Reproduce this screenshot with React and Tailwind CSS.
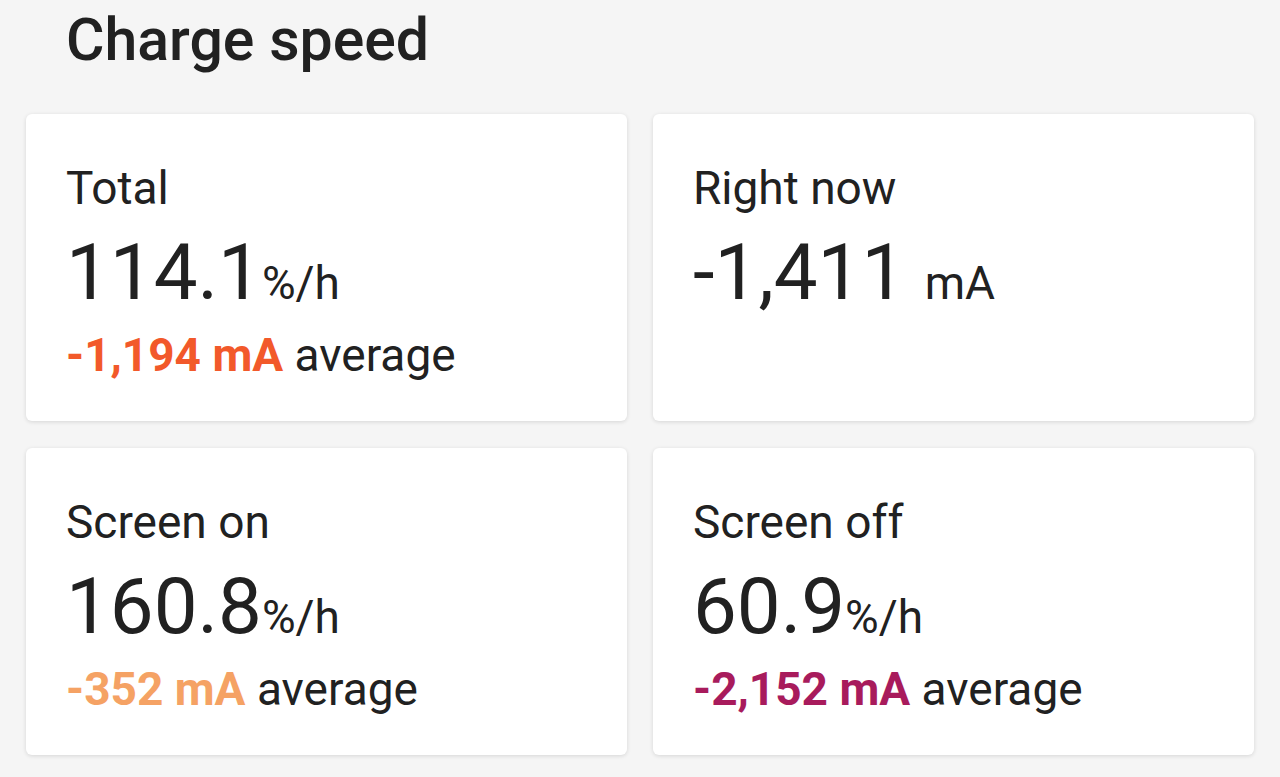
import React from 'react';

const stats = [
  { label: 'Total', value: '114.1', unit: '%/h', avg: '-1,194 mA', color: 'text-[#f2592a]' },
  { label: 'Right now', value: '-1,411', unit: 'mA', spaced: true },
  { label: 'Screen on', value: '160.8', unit: '%/h', avg: '-352 mA', color: 'text-[#f5a264]' },
  { label: 'Screen off', value: '60.9', unit: '%/h', avg: '-2,152 mA', color: 'text-[#a81b5c]' },
];

function StatCard({ stat }) {
  return (
    <div className="bg-white rounded-[6px] shadow-[0_1px_4px_rgba(0,0,0,0.13)] px-[40px] pt-[47px] pb-[39px]">
      <div className="text-[46px] leading-[54px]">{stat.label}</div>
      <div className="mt-[10px] text-[78px] leading-[96px] whitespace-pre">
        {stat.value}{stat.spaced ? ' ' : ''}
        <span className="text-[46px] leading-none">{stat.unit}</span>
      </div>
      {stat.avg && (
        <div className="mt-[7px] text-[46px] leading-[54px]">
          <span className={`font-bold ${stat.color}`}>{stat.avg}</span> average
        </div>
      )}
    </div>
  );
}

export default function App() {
  return (
    <div className="min-h-screen bg-[#f5f5f5] px-[26px] text-[#212121] font-['Roboto',sans-serif]">
      <h1 className="pl-[40px] pt-[5px] mb-[39px] text-[59px] leading-[70px] font-medium">Charge speed</h1>
      <div className="grid grid-cols-2 gap-x-[26px] gap-y-[27px]">
        {stats.map((s) => (
          <StatCard key={s.label} stat={s} />
        ))}
      </div>
    </div>
  );
}
